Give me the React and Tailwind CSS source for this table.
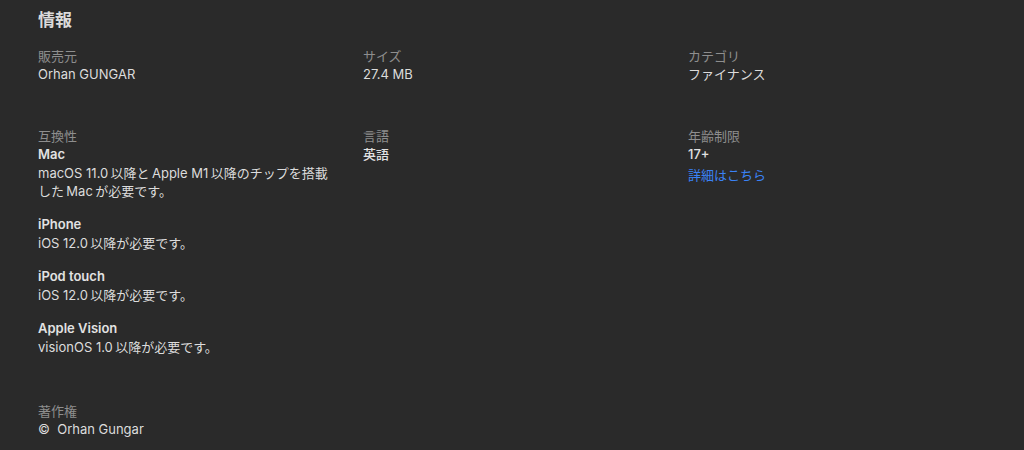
const FONT = "font-['Inter','Noto_Sans_CJK_JP',sans-serif]";

// thin spaces stand in for the automatic latin/kana spacing
const COMPAT = [
    { device: 'Mac', lines: ['macOS 11.0\u2009以降と\u2009Apple M1\u2009以降のチップを搭載', 'した\u2009Mac\u2009が必要です。'] },
    { device: 'iPhone', lines: ['iOS 12.0\u2009以降が必要です。'] },
    { device: 'iPod touch', lines: ['iOS 12.0\u2009以降が必要です。'] },
    { device: 'Apple Vision', lines: ['visionOS 1.0\u2009以降が必要です。'] },
];

function Label({ children }) {
    return <div className="text-[13px] leading-[18px] text-[#8e8e8e]">{children}</div>;
}

function Value({ children, weight }) {
    if (weight === 'bold') {
        return <div className="text-[13px] leading-[19px] font-semibold text-[#e2e2e2]">{children}</div>;
    }
    if (weight === 'medium') {
        return <div className="text-[13px] leading-[19px] font-medium text-[#e2e2e2]">{children}</div>;
    }
    return <div className="text-[13px] leading-[18px] text-[#dcdcdc]">{children}</div>;
}

export default function App() {
    return (
        <div className={`${FONT} w-[1024px] h-[450px] bg-[#2a2a2a] overflow-hidden px-[38px] pt-[10px]`}>
            <h2 className="text-[17px] leading-[20px] font-bold text-[#dadada]">情報</h2>

            {/* Row 1 */}
            <div className="grid grid-cols-[325px_325px_1fr] mt-[17px]">
                <div>
                    <Label>販売元</Label>
                    <Value>Orhan GUNGAR</Value>
                </div>
                <div>
                    <Label>サイズ</Label>
                    <Value>27.4 MB</Value>
                </div>
                <div>
                    <Label>カテゴリ</Label>
                    <Value>ファイナンス</Value>
                </div>
            </div>

            {/* Row 2 */}
            <div className="grid grid-cols-[325px_325px_1fr] mt-[44px]">
                <div>
                    <Label>互換性</Label>
                    <div className="flex flex-col gap-[15px]">
                        {COMPAT.map((c) => (
                            <div key={c.device}>
                                <Value weight="bold">{c.device}</Value>
                                {c.lines.map((l) => (
                                    <Value key={l}>{l}</Value>
                                ))}
                            </div>
                        ))}
                    </div>
                </div>
                <div>
                    <Label>言語</Label>
                    <Value weight="medium">英語</Value>
                </div>
                <div>
                    <Label>年齢制限</Label>
                    <Value weight="medium">17+</Value>
                    <a className="block mt-[2px] text-[13px] leading-[18px] text-[#3a82f6]">詳細はこちら</a>
                </div>
            </div>

            {/* Row 3 */}
            <div className="mt-[46px]">
                <Label>著作権</Label>
                <Value>©&nbsp; Orhan Gungar</Value>
            </div>
        </div>
    );
}
